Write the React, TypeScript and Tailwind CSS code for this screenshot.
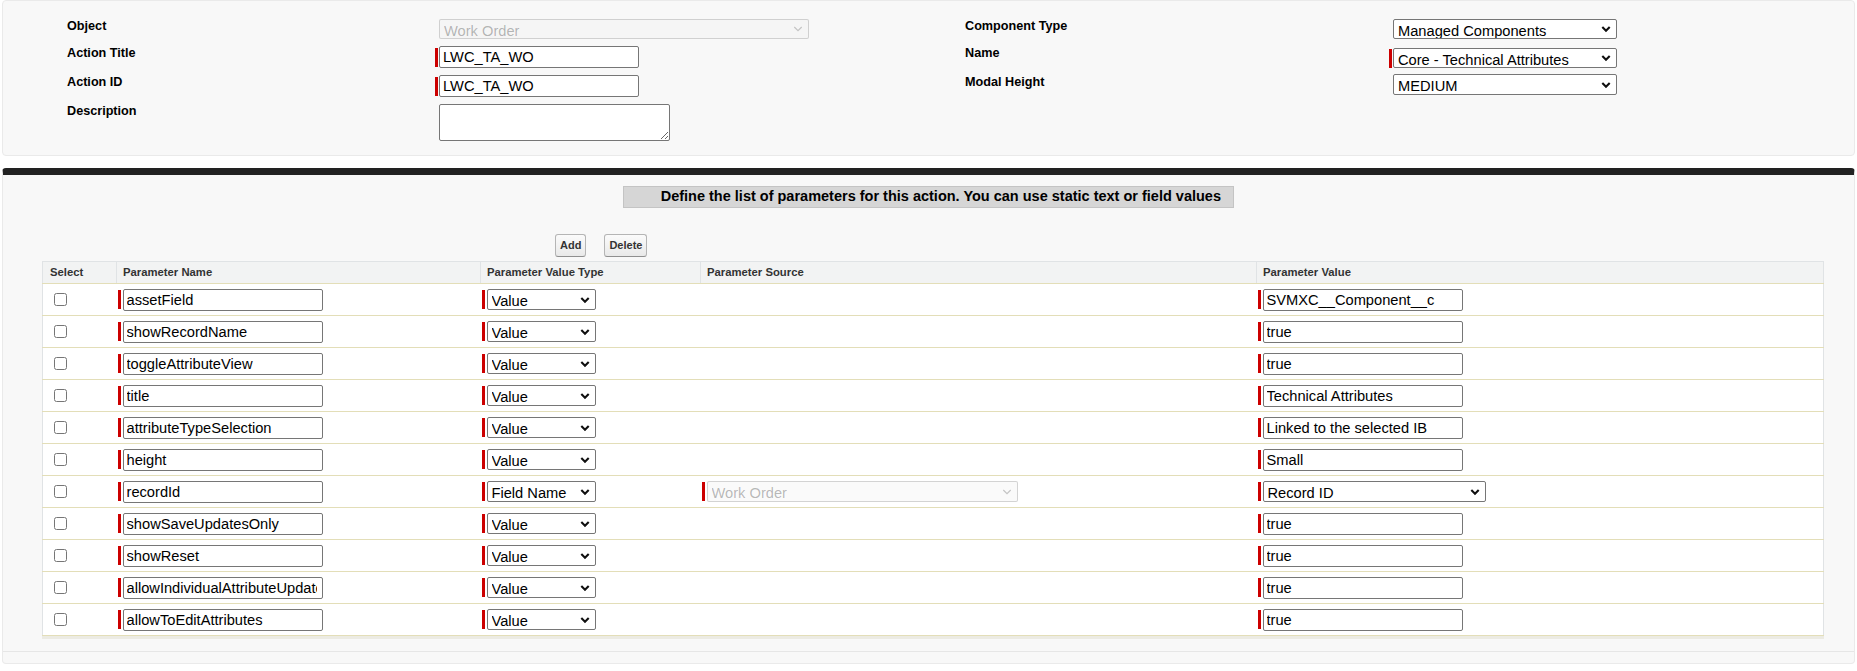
import React from "react";

type ParamRow = {
  name: string;
  type: string;
  value: string;
  fromField?: boolean;
};

const params: ParamRow[] = [
  { name: "assetField", type: "Value", value: "SVMXC__Component__c" },
  { name: "showRecordName", type: "Value", value: "true" },
  { name: "toggleAttributeView", type: "Value", value: "true" },
  { name: "title", type: "Value", value: "Technical Attributes" },
  { name: "attributeTypeSelection", type: "Value", value: "Linked to the selected IB" },
  { name: "height", type: "Value", value: "Small" },
  { name: "recordId", type: "Field Name", value: "Record ID", fromField: true },
  { name: "showSaveUpdatesOnly", type: "Value", value: "true" },
  { name: "showReset", type: "Value", value: "true" },
  { name: "allowIndividualAttributeUpdates", type: "Value", value: "true" },
  { name: "allowToEditAttributes", type: "Value", value: "true" },
];

function Chevron({ muted }: { muted?: boolean }) {
  return (
    <svg
      width="10"
      height="7"
      viewBox="0 0 10 7"
      className="pointer-events-none absolute right-[6px] top-1/2 -translate-y-1/2"
    >
      <path
        d="M1.3 1.5 L5 5.2 L8.7 1.5"
        fill="none"
        stroke={muted ? "#c4c4c4" : "#111"}
        strokeWidth={muted ? 1.2 : 2.1}
      />
    </svg>
  );
}

function Dropdown({ label, box, disabled }: { label: string; box: string; disabled?: boolean }) {
  return (
    <div className={`relative ${box}`}>
      <select
        disabled={disabled}
        defaultValue={label}
        className={
          disabled
            ? "block h-full w-full appearance-none rounded-[2px] border border-[#767676]/30 bg-[#efefef]/30 pl-[4px] pr-[18px] text-[14.67px] text-[#101010]/30 outline-none"
            : "block h-full w-full appearance-none rounded-[2px] border border-[#767676] bg-white pl-[4px] pr-[18px] text-[14.67px] text-black outline-none"
        }
      >
        <option>{label}</option>
      </select>
      <Chevron muted={disabled} />
    </div>
  );
}

function TextBox({ value }: { value: string }) {
  return (
    <input
      type="text"
      defaultValue={value}
      className="h-[22px] w-[200px] rounded-[2px] border border-[#767676] bg-white pl-[3px] pr-[5px] text-[14.67px] text-black outline-none"
    />
  );
}

function Required({ children, on = true }: { children: React.ReactNode; on?: boolean }) {
  return (
    <div className="flex items-center">
      <span className={on ? "mr-[1px] h-[19px] w-[3px] bg-[#c00]" : "mr-[1px] h-[19px] w-[3px]"} />
      {children}
    </div>
  );
}

function CellReq({ children }: { children: React.ReactNode }) {
  return (
    <div className="flex items-center pl-[1px]">
      <span className="mr-[2px] h-[19px] w-[3px] bg-[#c00]" />
      {children}
    </div>
  );
}

function Label({ children }: { children: React.ReactNode }) {
  return <div className="text-[12.65px] font-bold leading-[15px] text-black">{children}</div>;
}

function ActionForm() {
  return (
    <section className="rounded-[4px] border border-[#eaeaea] bg-[#f8f8f8] pb-[14px] pl-[64px] pt-[18px]">
      <div className="grid grid-cols-[368px_530px_424px_1fr] gap-y-[7px]">
        <Label>Object</Label>
        <div className="flex items-center">
          <Required on={false}>
            <Dropdown label="Work Order" box="h-[20px] w-[370px]" disabled />
          </Required>
        </div>
        <Label>Component Type</Label>
        <div className="flex items-center">
          <Required on={false}>
            <Dropdown label="Managed Components" box="h-[20px] w-[224px]" />
          </Required>
        </div>

        <Label>Action Title</Label>
        <div className="flex items-center">
          <Required>
            <TextBox value="LWC_TA_WO" />
          </Required>
        </div>
        <Label>Name</Label>
        <div className="pt-[2px]">
          <Required>
            <Dropdown label="Core - Technical Attributes" box="h-[20px] w-[224px]" />
          </Required>
        </div>

        <Label>Action ID</Label>
        <div className="flex items-center">
          <Required>
            <TextBox value="LWC_TA_WO" />
          </Required>
        </div>
        <Label>Modal Height</Label>
        <div className="-mt-[1px]">
          <Required on={false}>
            <Dropdown label="MEDIUM" box="h-[21px] w-[224px]" />
          </Required>
        </div>

        <Label>Description</Label>
        <div className="flex items-center">
          <Required on={false}>
            <textarea className="h-[37px] w-[231px] rounded-[2px] border border-[#767676] bg-white px-[3px] text-[14.67px] outline-none" />
          </Required>
        </div>
        <div />
        <div />
      </div>
    </section>
  );
}

function ToolButton({ children }: { children: React.ReactNode }) {
  return (
    <button
      type="button"
      className="h-[23px] rounded-[3px] border border-[#b5b5b5] border-b-[#8f8f8f] bg-linear-to-b from-[#fbfbfb] to-[#e9e9e9] px-[4px] text-[11px] font-bold text-[#333]"
    >
      {children}
    </button>
  );
}

function ParamTable() {
  const head =
    "h-[22px] border-l border-t border-b border-[#e0e3e5] border-b-[#e3deb8] bg-[#f2f3f3] pl-[6px] text-left align-middle text-[11.3px] font-bold text-[#333]";
  const cell = "h-[32px] border-b border-[#e3deb8] p-0 align-middle";
  return (
    <div className="border-b-[3px] border-[#ecebe3]">
      <table className="w-full table-fixed border-collapse border border-[#e0e3e5] bg-white">
        <colgroup>
          <col className="w-[74px]" />
          <col className="w-[364px]" />
          <col className="w-[220px]" />
          <col className="w-[556px]" />
          <col />
        </colgroup>
        <thead>
          <tr>
            <th className="h-[22px] border-b border-t border-[#e0e3e5] border-b-[#e3deb8] bg-[#f2f3f3] pl-[7px] text-left align-middle text-[11.3px] font-bold text-[#333]">
              Select
            </th>
            <th className={head}>Parameter Name</th>
            <th className={head}>Parameter Value Type</th>
            <th className={head}>Parameter Source</th>
            <th className={head}>Parameter Value</th>
          </tr>
        </thead>
        <tbody>
          {params.map((p) => (
            <tr key={p.name}>
              <td className={cell}>
                <input type="checkbox" className="m-0 ml-[11px] block h-[13px] w-[13px]" />
              </td>
              <td className={cell}>
                <CellReq>
                  <TextBox value={p.name} />
                </CellReq>
              </td>
              <td className={cell}>
                <CellReq>
                  <Dropdown label={p.type} box="h-[21px] w-[109px]" />
                </CellReq>
              </td>
              <td className={cell}>
                {p.fromField ? (
                  <CellReq>
                    <Dropdown label="Work Order" box="h-[21px] w-[311px]" disabled />
                  </CellReq>
                ) : null}
              </td>
              <td className={cell}>
                <CellReq>
                  {p.fromField ? (
                    <Dropdown label={p.value} box="h-[21px] w-[223px]" />
                  ) : (
                    <TextBox value={p.value} />
                  )}
                </CellReq>
              </td>
            </tr>
          ))}
        </tbody>
      </table>
    </div>
  );
}

function ParametersBlock() {
  return (
    <section className="mt-[12px] rounded-[4px] border border-[#eaeaea] border-t-[7px] border-t-[#222] bg-[#f8f8f8]">
      <div className="pt-[11px]">
        <div className="mx-auto flex h-[22px] w-[611px] items-center justify-end border border-[#c4c4c4] bg-[#d6d6d6] pr-[12px] text-[14.5px] font-bold text-black">
          Define the list of parameters for this action. You can use static text or field values
        </div>
      </div>
      <div className="mt-[26px] flex gap-[18px] pl-[552px]">
        <ToolButton>Add</ToolButton>
        <ToolButton>Delete</ToolButton>
      </div>
      <div className="ml-[39px] mr-[30px] mt-[4px]">
        <ParamTable />
      </div>
      <div className="mt-[12px] h-[12px] border-t border-[#e6e6e6]" />
    </section>
  );
}

export default function App() {
  return (
    <div className="min-h-screen bg-white px-[2px] font-['Liberation_Sans',Arial,sans-serif] text-black">
      <ActionForm />
      <ParametersBlock />
    </div>
  );
}
